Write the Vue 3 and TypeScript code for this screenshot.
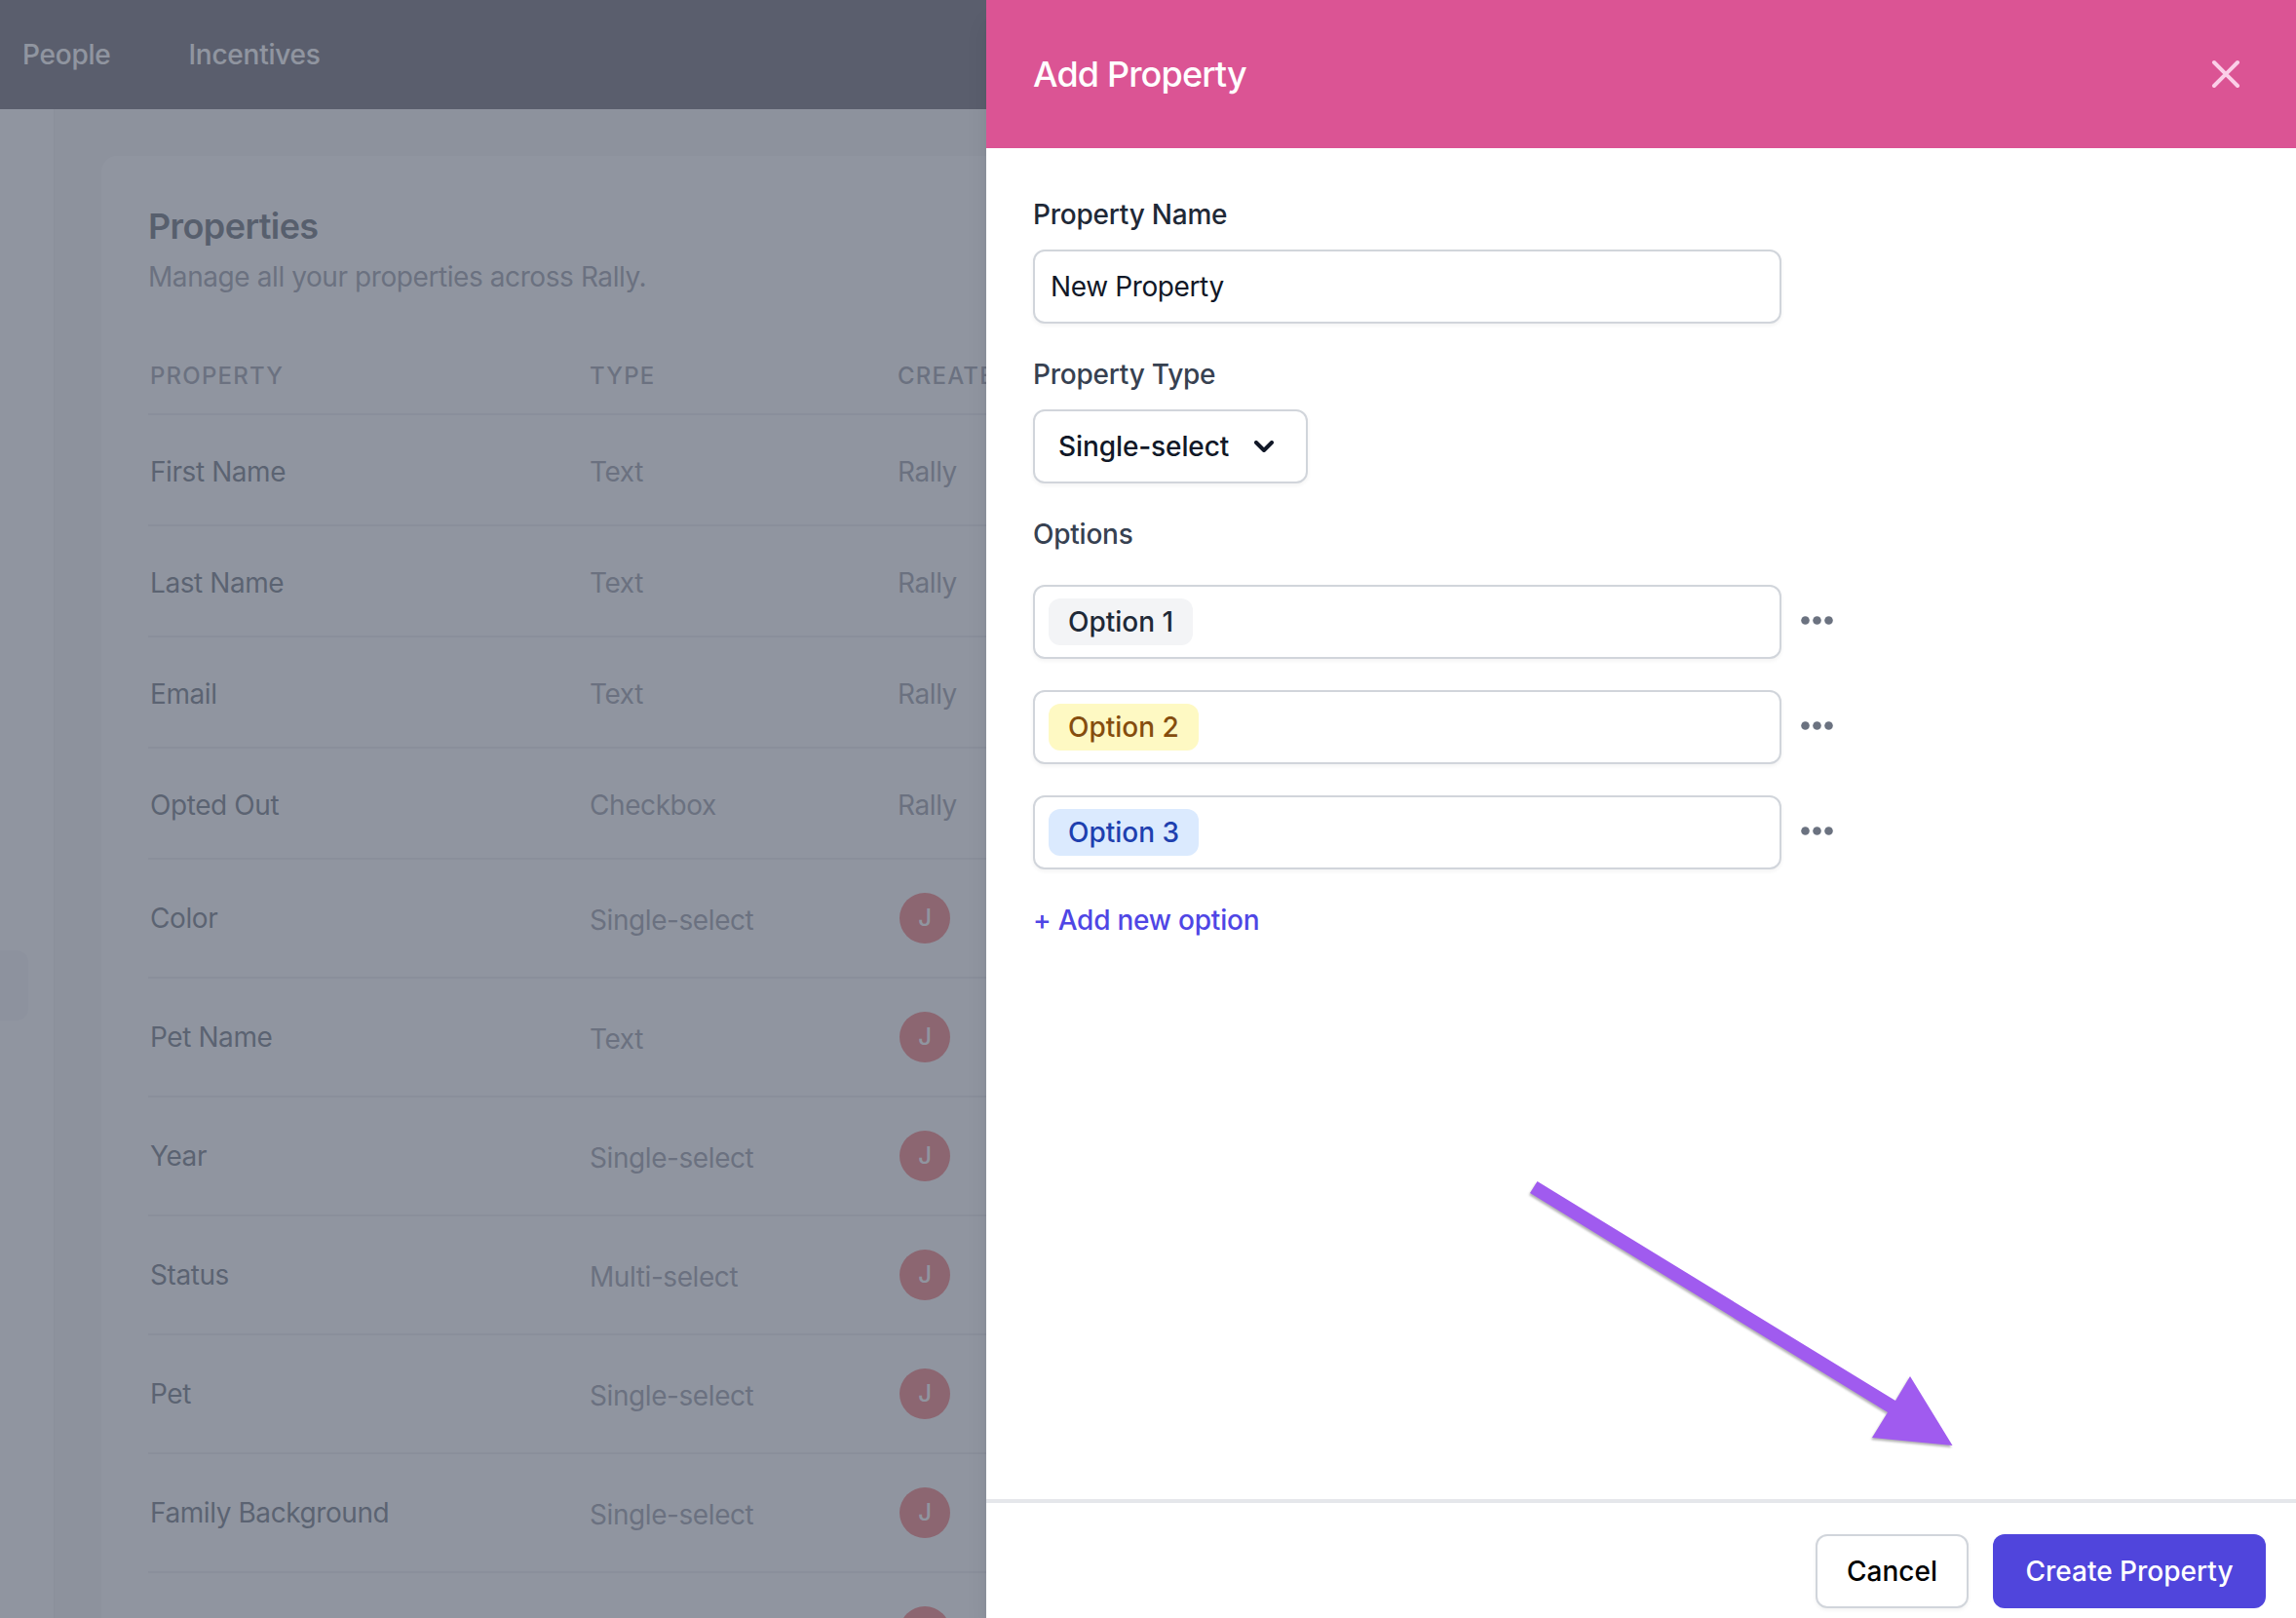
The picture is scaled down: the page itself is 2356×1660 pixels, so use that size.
<template>
  <div class="app">
    <div class="page">
      <nav class="topbar">
        <a class="nav-link">People</a>
        <a class="nav-link">Incentives</a>
      </nav>
      <div class="main">
        <aside class="sidebar">
          <div class="sidebar-tab"></div>
        </aside>
        <section class="card">
          <h1 class="card-title">Properties</h1>
          <p class="card-sub">Manage all your properties across Rally.</p>
          <div class="table-head">
            <span>Property</span>
            <span>Type</span>
            <span>Created by</span>
          </div>
          <div
            v-for="row in rows"
            :key="row.name"
            class="table-row"
            :class="{ 'table-row_user': !row.rally }"
          >
            <span class="cell-name">{{ row.name }}</span>
            <span class="cell-type">{{ row.type }}</span>
            <span v-if="row.rally" class="cell-type">Rally</span>
            <span v-else class="avatar">J</span>
          </div>
        </section>
      </div>
    </div>

    <div class="backdrop"></div>

    <aside class="panel">
      <header class="panel-header">
        <h2 class="panel-title">Add Property</h2>
        <button class="close">
          <svg width="48" height="48" viewBox="0 0 24 24" fill="none" stroke="currentColor" stroke-width="2" stroke-linecap="round">
            <path d="M6 18L18 6M6 6l12 12" />
          </svg>
        </button>
      </header>

      <div class="panel-body">
        <label class="label label_dark">Property Name</label>
        <input v-model="propertyName" class="field name-input" type="text" />

        <label class="label">Property Type</label>
        <button class="field select">
          <span>Single-select</span>
          <svg width="20" height="12" viewBox="0 0 20 12" fill="none" stroke="currentColor" stroke-width="4" stroke-linecap="round" stroke-linejoin="round">
            <path d="M2 2l8 8 8-8" />
          </svg>
        </button>

        <label class="label">Options</label>
        <div class="options">
          <div v-for="option in options" :key="option.label" class="option">
            <div class="field option-box">
              <span class="tag" :class="option.tone">{{ option.label }}</span>
            </div>
            <svg class="dots" width="33" height="9" viewBox="0 0 33 9" fill="currentColor">
              <circle cx="4.5" cy="4.5" r="4.3" />
              <circle cx="16.5" cy="4.5" r="4.3" />
              <circle cx="28.5" cy="4.5" r="4.3" />
            </svg>
          </div>
        </div>

        <a class="add-option">+ Add new option</a>
      </div>

      <footer class="panel-footer">
        <button class="btn btn_cancel">Cancel</button>
        <button class="btn btn_primary">Create Property</button>
      </footer>
    </aside>

    <svg class="arrow" width="460" height="300" viewBox="1560 1200 460 300">
      <polygon points="1577.5,1212 1945,1437 1960,1412 2003.5,1483 1921,1475 1937,1449 1570,1224" />
    </svg>
  </div>
</template>

<script setup lang="ts">
import { ref } from 'vue'

interface Row {
  name: string
  type: string
  rally: boolean
}

const propertyName = ref('New Property')

const rows: Row[] = [
  { name: 'First Name', type: 'Text', rally: true },
  { name: 'Last Name', type: 'Text', rally: true },
  { name: 'Email', type: 'Text', rally: true },
  { name: 'Opted Out', type: 'Checkbox', rally: true },
  { name: 'Color', type: 'Single-select', rally: false },
  { name: 'Pet Name', type: 'Text', rally: false },
  { name: 'Year', type: 'Single-select', rally: false },
  { name: 'Status', type: 'Multi-select', rally: false },
  { name: 'Pet', type: 'Single-select', rally: false },
  { name: 'Family Background', type: 'Single-select', rally: false },
  { name: '', type: '', rally: false }
]

const options = [
  { label: 'Option 1', tone: 'tag_gray' },
  { label: 'Option 2', tone: 'tag_yellow' },
  { label: 'Option 3', tone: 'tag_blue' }
]
</script>

<style>
html,
body {
  margin: 0;
  background: #fff;
}
</style>

<style scoped>
.app {
  position: relative;
  width: 2356px;
  height: 1660px;
  overflow: hidden;
  font-family: Inter, 'Liberation Sans', sans-serif;
  font-size: 28px;
  line-height: 40px;
}

.page {
  width: 1012px;
  overflow: hidden;
  letter-spacing: -0.42px;
}

.topbar {
  height: 112px;
  display: flex;
  align-items: center;
  gap: 80px;
  padding-left: 23px;
  background: #282634;
}

.nav-link {
  color: #fff;
  font-weight: 500;
  letter-spacing: -0.25px;
}

.main {
  display: flex;
  background: #f1f2f4;
  height: 1548px;
}

.sidebar {
  width: 55px;
  flex-shrink: 0;
  padding-top: 863px;
  background: #fff;
  border-right: 1px solid #e5e7eb;
}

.sidebar-tab {
  width: 29px;
  height: 72px;
  background: #f3f4f6;
  border-radius: 0 12px 12px 0;
}

.card {
  flex: 1;
  margin: 48px 0 0 48px;
  padding: 48px;
  background: #fff;
  border-radius: 16px 0 0 0;
}

.card-title {
  margin: 0;
  font-size: 36px;
  line-height: 48px;
  font-weight: 600;
  letter-spacing: -0.6px;
  color: #1f2937;
}

.card-sub {
  margin: 8px 0 0;
  color: #6b7280;
}

.table-head,
.table-row {
  display: grid;
  grid-template-columns: 451px 316px 1fr;
  padding-left: 2px;
  border-bottom: 2px solid #e5e7eb;
}

.table-head {
  margin-top: 66px;
  padding-bottom: 22px;
  font-size: 24px;
  line-height: 32px;
  font-weight: 500;
  letter-spacing: 0.05em;
  text-transform: uppercase;
  white-space: nowrap;
  color: #6b7280;
}

.table-row {
  height: 112px;
  align-items: center;
}

.table-row_user {
  height: 120px;
}

.cell-name {
  color: #2f3947;
}

.cell-type {
  color: #6b7280;
}

/* text in the plain rows sits a little low, same for the type column of user rows */
.table-row:not(.table-row_user) span,
.table-row_user .cell-type {
  margin-top: 4px;
}

.avatar {
  width: 52px;
  height: 52px;
  margin-left: 2px;
  display: flex;
  align-items: center;
  justify-content: center;
  border-radius: 50%;
  background: #ef4444;
  color: #fff;
  font-size: 24px;
  font-weight: 500;
}

.backdrop {
  position: absolute;
  inset: 0;
  background: rgba(107, 114, 128, 0.75);
}

.panel {
  position: absolute;
  top: 0;
  right: 0;
  bottom: 0;
  width: 1344px;
  display: flex;
  flex-direction: column;
  background: #fff;
  letter-spacing: -0.23px;
  box-shadow: 0 20px 25px -5px rgba(0, 0, 0, 0.1), 0 10px 10px -5px rgba(0, 0, 0, 0.04);
}

.panel-header {
  height: 152px;
  flex-shrink: 0;
  box-sizing: border-box;
  display: flex;
  align-items: center;
  justify-content: space-between;
  padding: 0 48px;
  background: #db5494;
}

.panel-title {
  margin: 0;
  font-size: 36px;
  line-height: 48px;
  font-weight: 500;
  letter-spacing: -0.85px;
  color: #fff;
}

.close {
  display: flex;
  padding: 0;
  border: 0;
  background: none;
  color: #fbcfe8;
}

.panel-body {
  flex: 1;
  display: flex;
  flex-direction: column;
  align-items: flex-start;
  padding: 48px 48px 0;
}

.label {
  font-weight: 500;
  color: #374151;
}

.label_dark {
  color: #1f2937;
}

.field {
  box-sizing: border-box;
  height: 76px;
  border: 2px solid #d1d5db;
  border-radius: 12px;
  background: #fff;
  box-shadow: 0 2px 4px rgba(0, 0, 0, 0.05);
  font-family: inherit;
  font-size: 28px;
  color: #111827;
}

.name-input {
  width: 768px;
  margin: 16px 0 32px;
  padding: 0 16px;
  outline: none;
  letter-spacing: -0.38px;
}

.select {
  width: 282px;
  margin: 16px 0 32px;
  padding: 0 33px 0 24px;
  display: flex;
  align-items: center;
  justify-content: space-between;
  font-weight: 500;
  letter-spacing: -0.1px;
}

.options {
  margin-top: 32px;
  display: flex;
  flex-direction: column;
  gap: 32px;
}

.option {
  display: flex;
  align-items: center;
  gap: 20px;
}

.option-box {
  width: 768px;
  display: flex;
  align-items: center;
  padding-left: 14px;
}

.dots {
  margin-top: -4px;
  color: #6b7280;
}

.tag {
  height: 48px;
  display: flex;
  align-items: center;
  padding: 0 20px;
  border-radius: 12px;
  font-weight: 500;
  letter-spacing: 0;
}

.tag_gray {
  background: #f3f4f6;
  color: #1f2937;
}

.tag_yellow {
  background: #fef9c3;
  color: #854d0e;
}

.tag_blue {
  background: #dbeafe;
  color: #1e40af;
}

.add-option {
  margin-top: 32px;
  font-weight: 500;
  color: #4f46e5;
}

.panel-footer {
  flex-shrink: 0;
  display: flex;
  justify-content: flex-end;
  gap: 25px;
  padding: 32px 31px 10px 0;
  border-top: 4px solid #e5e7eb;
}

.btn {
  box-sizing: border-box;
  height: 76px;
  border-radius: 12px;
  font-family: inherit;
  font-size: 28px;
  font-weight: 500;
}

.btn_cancel {
  width: 157px;
  padding: 0;
  border: 2px solid #d1d5db;
  background: #fff;
  color: #000;
  box-shadow: 0 2px 4px rgba(0, 0, 0, 0.05);
}

.btn_primary {
  width: 280px;
  padding: 0;
  border: 0;
  background: #5045dc;
  color: #fff;
}

.arrow {
  position: absolute;
  left: 1560px;
  top: 1200px;
  fill: #a05bef;
  filter: drop-shadow(-1px 2px 1px rgba(0, 0, 0, 0.3));
}
</style>
